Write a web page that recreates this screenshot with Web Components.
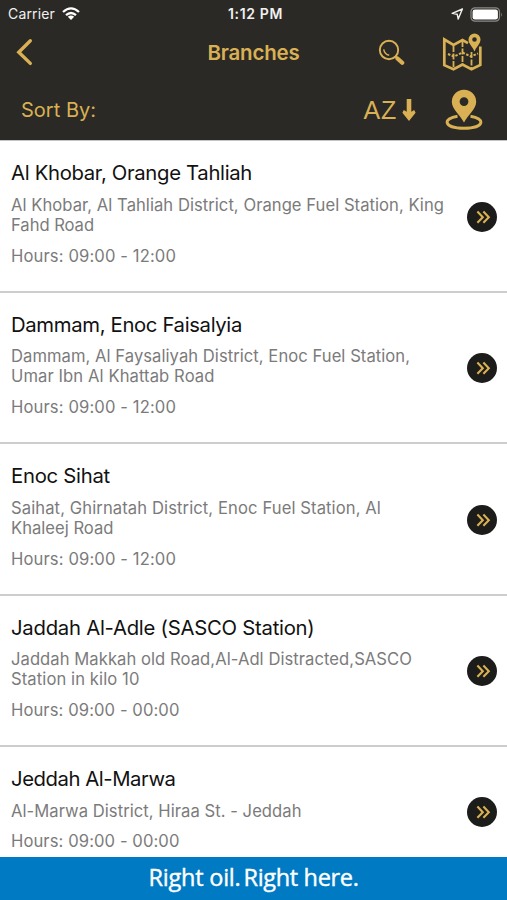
<!DOCTYPE html>
<html lang="en">
<head>
	<meta charset="utf-8">
	<title>Branches</title>
	<meta name="viewport" content="width=device-width">
</head>
<style>
body, html {
	margin:0;
	height:100%;
	overflow:hidden;
	font-family:Inter, 'Liberation Sans', sans-serif;
	background:#fff;
}
</style>
<body>
<branches-app>
	<status-bar slot="header"></status-bar>
	<nav-bar slot="header"><text-line width="92">Branches</text-line></nav-bar>
	<sort-bar slot="header"><text-line width="75">Sort By:</text-line></sort-bar>

	<branch-row>
		<text-line slot="name" width="241">Al Khobar, Orange Tahliah</text-line>
		<text-line slot="address" width="433">Al Khobar, Al Tahliah District, Orange Fuel Station, King</text-line>
		<text-line slot="address" width="83">Fahd Road</text-line>
		<text-line slot="hours" width="165">Hours: 09:00 - 12:00</text-line>
	</branch-row>
	<branch-row>
		<text-line slot="name" width="231">Dammam, Enoc Faisalyia</text-line>
		<text-line slot="address" width="399">Dammam, Al Faysaliyah District, Enoc Fuel Station,</text-line>
		<text-line slot="address" width="203.5">Umar Ibn Al Khattab Road</text-line>
		<text-line slot="hours" width="165">Hours: 09:00 - 12:00</text-line>
	</branch-row>
	<branch-row>
		<text-line slot="name" width="99">Enoc Sihat</text-line>
		<text-line slot="address" width="370">Saihat, Ghirnatah District, Enoc Fuel Station, Al</text-line>
		<text-line slot="address" width="102.5">Khaleej Road</text-line>
		<text-line slot="hours" width="165">Hours: 09:00 - 12:00</text-line>
	</branch-row>
	<branch-row>
		<text-line slot="name" width="303.5">Jaddah Al-Adle (SASCO Station)</text-line>
		<text-line slot="address" width="401">Jaddah Makkah old Road,Al-Adl Distracted,SASCO</text-line>
		<text-line slot="address" width="128.5">Station in kilo 10</text-line>
		<text-line slot="hours" width="168.5">Hours: 09:00 - 00:00</text-line>
	</branch-row>
	<branch-row>
		<text-line slot="name" width="164.5">Jeddah Al-Marwa</text-line>
		<text-line slot="address" width="290.5">Al-Marwa District, Hiraa St. - Jeddah</text-line>
		<text-line slot="hours" width="168.5">Hours: 09:00 - 00:00</text-line>
	</branch-row>

	<slogan-bar slot="footer">
		<text-line width="92">Right oil.</text-line>
		<text-line width="115">Right here.</text-line>
	</slogan-bar>
</branches-app>
</body>

<script type="text/javascript">
// every element is a shadow root around its own markup
function define(name, html) {
	customElements.define(name, class extends HTMLElement {
		constructor() {
			super()
			this.attachShadow({mode:'open'}).innerHTML = html
		}
	})
}

define('branches-app', `
	<style>
	:host {
		display:grid;
		grid-template-rows:140px minmax(0, 1fr) 43px;
		height:100vh;
	}
	header {
		background:#2b2925;
		color:#d9b154;
		display:grid;
		grid-template-rows:28px 48px 64px;
	}
	main {
		overflow:hidden;
		padding-top:1px;
		box-shadow:inset 0 1px #c4c4c4;
	}
	</style>
	<header><slot name="header"></slot></header>
	<main><slot></slot></main>
	<slot name="footer"></slot>
`)

define('status-bar', `
	<style>
	:host {
		display:grid;
		grid-template-columns:1fr auto 1fr;
		align-items:center;
		padding:0 4px 0 8px;
		color:#f1f1f0;
		font-size:14px;
		line-height:28px;
	}
	div { display:flex; align-items:center; }
	.left { gap:7px; }
	.right { justify-content:flex-end; gap:6px; }
	b { font-weight:600; }
	svg { display:block; }
	</style>
	<div class="left"><text-line width="47">Carrier</text-line>
		<svg width="18" height="14" viewBox="0 0 18 14" fill="none" stroke="#fff" stroke-width="2.3">
			<path d="M1 5Q9-2.2 17 5M4 8.2Q9 3.7 14 8.2"/>
			<path d="M5.8 9.8Q9 7.2 12.2 9.8L9 13z" fill="#fff" stroke="none"/>
		</svg>
	</div>
	<b><text-line width="55">1:12 PM</text-line></b>
	<div class="right">
		<svg width="13" height="12" viewBox="0 0 13 12" fill="none" stroke="#f1f1f0" stroke-width="1.4" stroke-linejoin="round">
			<path d="M11.4 1L1.2 5.4L6.2 6.2L7.2 11z"/>
		</svg>
		<svg width="33" height="15" viewBox="0 0 33 15">
			<rect x="1" y=".8" width="28.5" height="13.4" rx="4" fill="none" stroke="#8b8a88" stroke-width="1.2"/>
			<rect x="2.6" y="2.4" width="25.3" height="10.2" rx="2.4" fill="#fff"/>
			<path d="M31 5.2q1.5 2.3 0 4.6z" fill="#8b8a88"/>
		</svg>
	</div>
`)

define('nav-bar', `
	<style>
	:host {
		display:grid;
		grid-template-columns:1fr auto 1fr;
		align-items:center;
		padding:0 25px 0 15px;
		font-size:20.5px;
		font-weight:600;
	}
	::slotted(text-line) { margin-left:10px; }
	.icons { display:flex; align-items:center; justify-content:flex-end; gap:37px; }
	svg { display:block; }
	</style>
	<svg width="19" height="28" viewBox="0 0 19 28" fill="none" stroke="#d9b154" stroke-width="3.4" stroke-linecap="round" stroke-linejoin="miter">
		<path d="M15.3 2.8L3.8 14.2L15.3 25.4"/>
	</svg>
	<slot></slot>
	<div class="icons">
		<svg width="27" height="27" viewBox="0 0 27 27" fill="none" stroke="#d9b154">
			<circle cx="11" cy="11" r="9.2" stroke-width="1.9"/>
			<path d="M5.7 10.3Q6.5 15.2 11.2 16.2" stroke-width="1.4"/>
			<path d="M17.3 17.3L19.5 19.5" stroke-width="2"/>
			<path d="M19.5 19.5L24.2 23.8" stroke-width="4.2" stroke-linecap="round"/>
		</svg>
		<svg width="40" height="40" viewBox="0 0 40 40" fill="none" stroke="#d9b154">
			<path d="M26 11.2L20.5 8L11.5 13L2.3 7.5V33.2L11.5 37.2L20.5 32.5L29.5 37.2L38.3 33V14.5" stroke-width="2.7"/>
			<path d="M11.5 14V36M20.5 9V32M29.5 20V36" stroke-width="1.8" stroke-dasharray="6 1.5"/>
			<path d="M6 22L12 24.5L20.5 20.5L29 24.5L36 21.5" stroke-width="2" stroke-dasharray="2.5 1.5"/>
			<path fill="#d9b154" stroke="none" fill-rule="evenodd" d="M32.5 1.5A6 6 0 0 0 26.5 7.5C26.5 12 31 15 32.5 19.5C34 15 38.5 12 38.5 7.5A6 6 0 0 0 32.5 1.5M32.5 5.2A2.3 2.3 0 1 1 32.5 9.8A2.3 2.3 0 1 1 32.5 5.2"/>
		</svg>
	</div>
`)

define('sort-bar', `
	<style>
	:host {
		display:flex;
		align-items:center;
		padding:4px 24px 0 21px;
		font-size:20px;
		line-height:24px;
	}
	::slotted(text-line) { flex:1; }
	.az { font:25px/24px 'Liberation Sans', sans-serif; margin-right:5px; }
	svg { display:block; }
	.pin { margin-left:29px; }
	</style>
	<slot></slot>
	<text-line class="az" width="33.5">AZ</text-line>
	<svg width="14" height="24" viewBox="0 0 14 24" fill="#d9b154">
		<path d="M4.7 1H9.3V13.7L12.2 12L13.6 14.8L7 23L.4 14.8L1.8 12L4.7 13.7z"/>
	</svg>
	<svg class="pin" width="38" height="42" viewBox="0 0 38 42" fill="none" stroke="#d9b154">
		<path d="M12.5 27.2C-2.5 29.3-2 39.2 19 39.2S40.5 29.3 25.5 27.2" stroke-width="2.9"/>
		<path fill="#d9b154" stroke="none" fill-rule="evenodd" d="M19 .8A12 12 0 0 0 6.8 13C6.8 20 15 26 19 33.5C23 26 31.2 20 31.2 13A12 12 0 0 0 19 .8M19 8.2A4.4 4.4 0 1 1 19 17A4.4 4.4 0 1 1 19 8.2"/>
	</svg>
`)

define('branch-row', `
	<style>
	:host {
		display:grid;
		grid-template-columns:1fr 30px;
		align-items:center;
		box-sizing:border-box;
		padding:19px 10px 24.3px 11px;
		border-bottom:2px solid #cdcdcd;
		color:#7b7b7b;
		font-size:16.6px;
		line-height:20.4px;
	}
	.name {
		color:#111;
		font-size:20.3px;
		line-height:26px;
		margin-bottom:8.5px;
	}
	.hours { margin-top:10.5px; }
	svg { display:block; margin-top:7px; }
	</style>
	<div>
		<div class="name"><slot name="name"></slot></div>
		<div><slot name="address"></slot></div>
		<div class="hours"><slot name="hours"></slot></div>
	</div>
	<svg width="30" height="30" viewBox="0 0 30 30">
		<circle cx="15" cy="15" r="15" fill="#1c1c1b"/>
		<path d="M10.4 9.6L15.8 15.2L10.4 20.8M16.4 9.6L21.8 15.2L16.4 20.8" fill="none" stroke="#d9b154" stroke-width="2.1"/>
	</svg>
`)

define('slogan-bar', `
	<style>
	:host {
		display:flex;
		justify-content:center;
		gap:3px;
		background:#007ac3;
		color:#fff;
		font:23.5px/41px 'Open Sans', 'Noto Sans', sans-serif;
		-webkit-text-stroke:.4px #fff;
	}
	</style>
	<slot></slot>
`)

// one line of text, tracked so that it runs to the given width
customElements.define('text-line', class extends HTMLElement {
	constructor() {
		super()
		this.attachShadow({mode:'open'}).innerHTML = `
		<style>
		:host { display:block; white-space:nowrap; }
		span { display:inline-block; }
		</style>
		<span><slot></slot></span>
		`
	}
	connectedCallback() {
		const span = this.shadowRoot.querySelector('span')
		const gap = this.getAttribute('width') - span.getBoundingClientRect().width
		span.style.letterSpacing = gap / this.textContent.length + 'px'
	}
})
</script>
</html>
